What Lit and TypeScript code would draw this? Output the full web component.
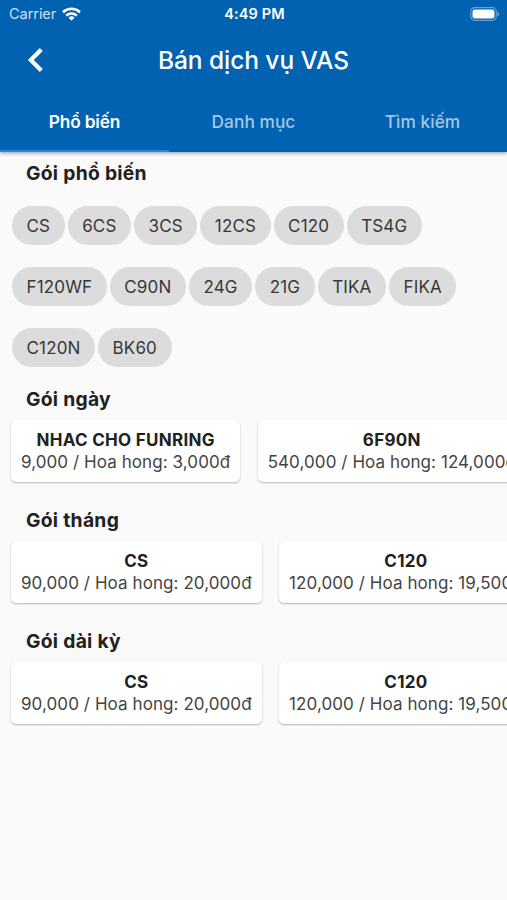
import { LitElement, html, css } from "lit";
import { customElement } from "lit/decorators.js";

interface Pack {
  name: string;
  detail: string;
}

const tabs = ["Phổ biến", "Danh mục", "Tìm kiếm"];

const popular = [
  ["CS", "6CS", "3CS", "12CS", "C120", "TS4G"],
  ["F120WF", "C90N", "24G", "21G", "TIKA", "FIKA"],
  ["C120N", "BK60"],
];

const longPacks: Pack[] = [
  { name: "CS", detail: "90,000 / Hoa hong: 20,000đ" },
  { name: "C120", detail: "120,000 / Hoa hong: 19,500đ" },
];

const groups: { title: string; packs: Pack[] }[] = [
  {
    title: "Gói ngày",
    packs: [
      { name: "NHAC CHO FUNRING", detail: "9,000 / Hoa hong: 3,000đ" },
      { name: "6F90N", detail: "540,000 / Hoa hong: 124,000đ" },
    ],
  },
  { title: "Gói tháng", packs: longPacks },
  { title: "Gói dài kỳ", packs: longPacks },
];

@customElement("app-root")
export class AppRoot extends LitElement {
  static styles = css`
    :host {
      display: block;
      height: 900px;
      overflow: hidden;
      background: #fafafa;
      color: #212121;
      font-family: Inter, "Liberation Sans", sans-serif;
      white-space: nowrap;
    }
    * {
      box-sizing: border-box;
    }
    header {
      position: relative;
      height: 152px;
      background: #0062b0;
      color: #fff;
      box-shadow: 0 1px 4px rgba(0, 0, 0, 0.42);
    }
    .status {
      display: grid;
      grid-template-columns: 1fr auto 1fr;
      align-items: center;
      height: 27px;
      padding: 0 7px 0 9px;
    }
    .carrier {
      display: flex;
      align-items: center;
      gap: 6px;
      font-size: 14.5px;
      letter-spacing: -0.05px;
      color: #cfe1f0;
    }
    .time {
      font-size: 14.5px;
      font-weight: 600;
      letter-spacing: 0.1px;
    }
    .battery {
      justify-self: end;
    }
    svg {
      display: block;
    }
    .bar {
      display: grid;
      grid-template-columns: 70px 1fr 70px;
      align-items: center;
      height: 65px;
    }
    .back {
      margin-left: 27px;
    }
    h1 {
      margin: 0;
      text-align: center;
      font-size: 24.5px;
      font-weight: 500;
      line-height: 30px;
      letter-spacing: -0.07px;
    }
    .tabs {
      display: grid;
      grid-template-columns: repeat(3, 1fr);
      height: 60px;
    }
    .tab {
      display: flex;
      align-items: center;
      justify-content: center;
      font-size: 17.3px;
      font-weight: 500;
      letter-spacing: 0.05px;
      color: #a3c7e4;
      border-bottom: 2px solid transparent;
    }
    .tab.active {
      font-weight: 600;
      letter-spacing: -0.15px;
      color: #fff;
      border-color: #1e88e5;
    }
    h2 {
      margin: 0;
      padding-left: 26px;
      height: 42px;
      line-height: 43px;
      font-size: 19.3px;
      font-weight: 650;
      letter-spacing: 0.28px;
    }
    .chips {
      display: flex;
      flex-direction: column;
      gap: 22px;
      padding: 12px 0 11px 12px;
    }
    .chip-row {
      display: flex;
      gap: 3px;
    }
    .chip {
      display: flex;
      align-items: center;
      height: 39px;
      padding: 0 14.5px;
      border-radius: 20px;
      background: #dcdcdc;
      color: #383838;
      font-size: 17px;
      letter-spacing: 0.16px;
    }
    .cards {
      display: flex;
      gap: 17.4px;
      padding-left: 11px;
      height: 79px;
    }
    .card {
      flex: none;
      display: flex;
      flex-direction: column;
      align-items: center;
      height: 62px;
      padding: 9px 10px 0;
      border-radius: 5px;
      background: #fff;
      box-shadow: 0 1px 2px rgba(0, 0, 0, 0.28);
      line-height: 22px;
    }
    .name {
      font-size: 17px;
      font-weight: 650;
      letter-spacing: 0.3px;
    }
    .detail {
      font-size: 17px;
      letter-spacing: 0.08px;
      color: #444;
    }
  `;

  render() {
    return html`
      <header>
        <div class="status">
          <div class="carrier">
            <span>Carrier</span>
            <svg width="19" height="14" viewBox="0 0 19 14" fill="none" stroke="#fff" stroke-width="2.6">
              <path d="M1 5.2a12.3 12.3 0 0 1 17 0" />
              <path d="M4.2 8.6a7.7 7.7 0 0 1 10.6 0" />
              <path d="M9.5 13.8 6.5 10.8a4.3 4.3 0 0 1 6 0z" fill="#fff" stroke="none" />
            </svg>
          </div>
          <span class="time">4:49 PM</span>
          <svg class="battery" width="30" height="14" viewBox="0 0 30 14">
            <rect x=".7" y=".7" width="25.6" height="12.6" rx="4" fill="none" stroke="#69a3d2" stroke-width="1.2" />
            <rect x="2.5" y="2.5" width="22" height="9" rx="2.3" fill="#fff" />
            <path d="M27.5 4.6c2.3.8 2.3 4 0 4.8z" fill="#69a3d2" />
          </svg>
        </div>
        <div class="bar">
          <svg class="back" width="17" height="26" viewBox="0 0 17 26" fill="none" stroke="#fff" stroke-width="4.2">
            <path d="M14.3 2.4 3.8 13l10.5 10.6" />
          </svg>
          <h1>Bán dịch vụ VAS</h1>
        </div>
        <nav class="tabs">
          ${tabs.map((t, i) => html`<div class="tab ${i === 0 ? "active" : ""}">${t}</div>`)}
        </nav>
      </header>
      <section>
        <h2>Gói phổ biến</h2>
        <div class="chips">
          ${popular.map(
            (row) => html`<div class="chip-row">${row.map((c) => html`<span class="chip">${c}</span>`)}</div>`
          )}
        </div>
      </section>
      ${groups.map(
        (g) => html`<section>
          <h2>${g.title}</h2>
          <div class="cards">
            ${g.packs.map(
              (p) => html`<div class="card">
                <span class="name">${p.name}</span>
                <span class="detail">${p.detail}</span>
              </div>`
            )}
          </div>
        </section>`
      )}
    `;
  }
}
